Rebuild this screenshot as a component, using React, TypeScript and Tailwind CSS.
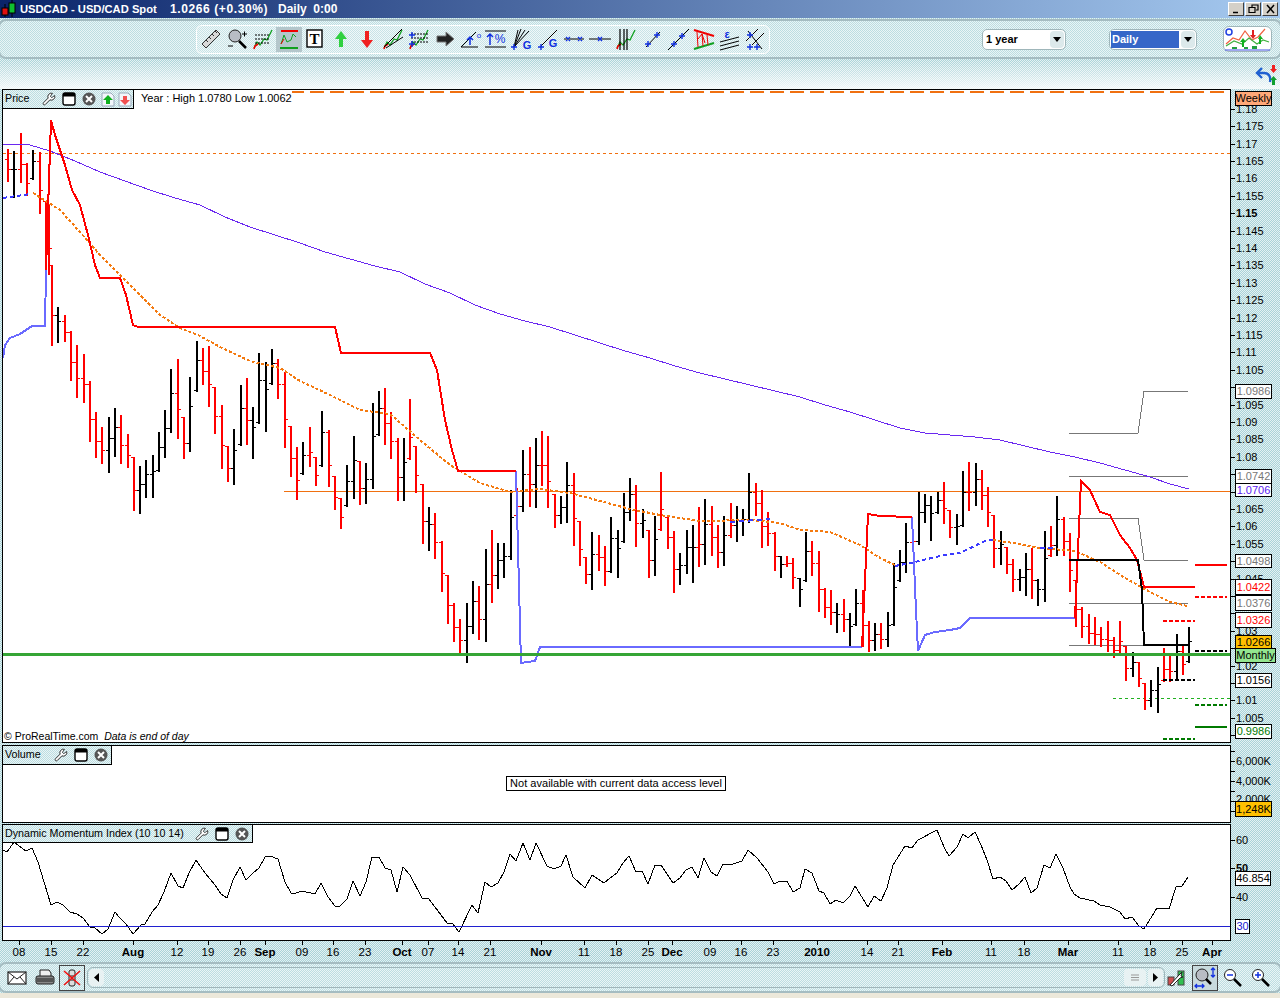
import type { ReactNode } from 'react';
import { Wrench } from 'lucide-react';

const dither = '[background:repeating-conic-gradient(#a9d3d8_0_25%,#e4f1f3_0_50%)_0_0/2px_2px]';
const fade = '[background:linear-gradient(#fff0,#ffffffd0),repeating-conic-gradient(#a9d3d8_0_25%,#e4f1f3_0_50%)_0_0/2px_2px]';
const panelFill = '[background:repeating-conic-gradient(#bcdde1_0_25%,#eaf5f6_0_50%)_0_0/2px_2px]';
const groupFill = '[background:repeating-conic-gradient(#c8e3e6_0_25%,#f0f8f9_0_50%)_0_0/2px_2px]';

// x, high, low, red
const bars: [number, number, number, number][] = [
  [7, 149, 182, 1], [13, 151, 198, 0], [20, 133, 183, 1], [26, 163, 196, 1], [32, 150, 180, 0], [39, 152, 214, 1],
  [45, 201, 275, 1], [48, 205, 275, 1], [51, 265, 346, 1], [57, 307, 343, 0], [64, 315, 342, 1], [70, 331, 381, 1],
  [76, 345, 398, 1], [83, 354, 403, 1], [89, 381, 442, 1], [95, 412, 458, 1], [101, 427, 464, 1], [108, 417, 473, 0],
  [114, 408, 457, 0], [120, 415, 464, 1], [127, 434, 468, 1], [133, 457, 511, 1], [139, 466, 514, 0], [145, 460, 498, 0],
  [152, 455, 498, 0], [158, 432, 472, 0], [164, 410, 458, 0], [170, 369, 433, 0], [177, 359, 439, 1], [183, 417, 459, 1],
  [189, 377, 452, 0], [196, 341, 392, 0], [202, 348, 385, 1], [208, 346, 407, 1], [214, 387, 434, 1], [221, 405, 469, 1],
  [227, 446, 482, 1], [233, 429, 485, 0], [240, 385, 446, 0], [246, 378, 445, 1], [252, 407, 459, 0], [258, 353, 424, 0],
  [265, 362, 432, 0], [271, 349, 385, 0], [277, 359, 399, 1], [284, 372, 448, 1], [290, 426, 477, 1], [296, 447, 500, 1],
  [302, 442, 475, 0], [309, 427, 467, 1], [315, 457, 486, 1], [321, 411, 467, 0], [328, 430, 487, 1], [334, 476, 510, 1],
  [340, 498, 529, 1], [346, 465, 507, 0], [353, 436, 499, 0], [359, 461, 505, 1], [365, 463, 504, 0], [372, 403, 489, 0],
  [378, 391, 436, 0], [384, 388, 445, 1], [390, 412, 459, 1], [397, 438, 501, 1], [403, 438, 501, 0], [409, 399, 460, 1],
  [415, 446, 493, 1], [422, 484, 544, 1], [428, 507, 551, 0], [434, 513, 559, 1], [441, 541, 592, 1], [447, 575, 624, 1],
  [453, 603, 642, 1], [459, 619, 653, 1], [466, 603, 663, 0], [472, 581, 634, 0], [478, 586, 640, 1], [485, 549, 642, 0],
  [491, 530, 603, 1], [497, 543, 589, 0], [503, 543, 578, 0], [510, 490, 560, 0], [516, 488, 517, 1], [522, 450, 512, 0],
  [529, 447, 507, 1], [535, 438, 508, 0], [541, 431, 486, 1], [547, 436, 508, 1], [554, 494, 528, 1], [560, 496, 524, 0],
  [566, 462, 523, 0], [573, 473, 546, 1], [579, 521, 566, 1], [585, 557, 584, 1], [591, 532, 590, 0], [598, 535, 571, 1],
  [604, 546, 586, 1], [610, 517, 573, 0], [617, 530, 578, 0], [623, 493, 543, 0], [629, 478, 521, 0], [635, 485, 547, 1],
  [642, 509, 538, 0], [648, 530, 578, 1], [654, 516, 576, 0], [660, 472, 531, 1], [667, 517, 549, 1], [673, 531, 593, 1],
  [679, 553, 585, 0], [686, 530, 574, 0], [692, 525, 583, 0], [698, 507, 567, 1], [704, 499, 565, 0], [711, 506, 556, 1],
  [717, 525, 568, 1], [723, 516, 566, 0], [730, 503, 538, 1], [736, 506, 542, 0], [742, 509, 536, 0], [748, 473, 523, 0],
  [755, 483, 516, 1], [761, 490, 548, 1], [767, 512, 546, 1], [774, 532, 571, 1], [780, 556, 578, 0], [786, 556, 567, 1],
  [792, 558, 589, 1], [799, 578, 607, 0], [805, 532, 582, 0], [811, 541, 576, 1], [818, 551, 612, 1], [824, 588, 618, 1],
  [830, 590, 625, 1], [836, 603, 633, 0], [843, 599, 632, 1], [849, 613, 646, 0], [855, 589, 626, 0], [862, 590, 647, 1],
  [868, 621, 652, 1], [874, 623, 651, 0], [880, 623, 649, 1], [887, 612, 647, 0], [893, 563, 626, 0], [899, 550, 582, 0],
  [905, 523, 573, 0], [912, 529, 549, 1], [918, 492, 545, 0], [924, 494, 523, 0], [930, 496, 541, 0], [937, 492, 514, 0],
  [943, 482, 524, 1], [949, 510, 538, 1], [956, 514, 545, 0], [962, 471, 527, 0], [968, 462, 511, 1], [975, 463, 506, 0],
  [981, 470, 510, 1], [987, 487, 527, 1], [993, 515, 568, 1], [1000, 531, 565, 0], [1006, 547, 574, 1], [1012, 559, 592, 1],
  [1019, 569, 591, 0], [1025, 553, 596, 0], [1031, 548, 599, 1], [1037, 579, 606, 0], [1044, 531, 602, 0], [1050, 526, 557, 1],
  [1056, 496, 556, 0], [1063, 517, 556, 1], [1069, 533, 592, 1], [1075, 580, 627, 1], [1081, 607, 638, 1], [1088, 614, 644, 1],
  [1094, 617, 645, 1], [1100, 627, 647, 1], [1107, 621, 652, 1], [1113, 637, 658, 1], [1119, 621, 653, 1], [1125, 646, 681, 1],
  [1132, 652, 677, 0], [1138, 662, 687, 1], [1144, 683, 710, 1], [1150, 680, 707, 0], [1157, 667, 713, 0], [1163, 648, 682, 1],
  [1169, 653, 682, 1], [1176, 634, 680, 0], [1182, 645, 675, 1], [1188, 627, 663, 0],
];

const ma200 = '3,144 30,145 50,151 75,161 100,172 125,181 150,190 175,198 200,205 225,217 250,227 275,235 300,243 325,252 350,259 375,266 400,272 425,284 450,293 475,305 500,314 525,321 550,327 575,335 600,343 625,351 650,358 675,366 700,373 725,379 750,385 775,391 800,397 825,405 850,412 875,420 900,428 925,433 950,435 975,437 1000,440 1025,446 1050,452 1075,457 1100,463 1125,470 1150,477 1170,484 1189,489';
const ma50 = '33,193 60,210 80,232 100,255 120,275 140,295 160,315 180,328 200,336 220,347 250,361 280,368 300,381 330,395 360,410 390,414 420,440 450,465 480,483 510,492 540,489 570,493 600,501 630,509 660,515 700,521 750,520 780,523 800,530 830,532 860,545 880,558 895,565';
const ma50b = '993,540 1020,544 1040,548 1075,551 1100,562 1125,578 1150,592 1170,602 1187,606';
const ma50Blue = '895,566 915,562 940,556 960,553 985,541 993,540';
const stopRed = ['46,270 51,120 55,135 65,165 72,190 80,205 88,235 95,265 100,278 120,278 126,295 133,325 138,327 335,327 341,353 430,353 437,370 445,420 452,450 458,471 516,471', '862,647 868,514 880,516 912,517', '1075,618 1081,481 1090,490 1100,512 1110,515 1120,535 1130,548 1137,560 1144,587 1195,587'];
const stopBlue = ['3,358 5,345 10,338 20,334 32,326 45,326 46,270', '516,471 521,663 535,661 540,647 862,647', '912,517 916,610 918,651 925,635 935,632 950,630 960,628 970,618 1075,618'];
const grey = ['1069,433 1138,433 1144,391 1188,391', '1069,476 1188,476', '1069,518 1138,518 1144,560 1188,560', '1069,603 1188,603', '1069,645 1144,645'];
const dmi = '3,850 7,852 14,842 26,851 32,848 38,862 51,905 57,902 63,905 70,912 77,914 83,918 90,927 95,928 102,934 108,929 115,912 119,917 126,924 133,934 141,925 145,924 152,912 158,905 164,892 171,873 178,886 183,888 189,873 196,860 205,873 215,885 221,894 227,898 233,880 240,867 246,880 253,873 259,868 265,857 270,856 278,859 285,882 291,893 296,893 302,891 315,894 321,883 328,897 335,906 340,906 347,899 353,881 360,896 366,882 372,857 379,857 385,868 391,870 397,892 403,867 410,875 422,898 428,898 435,907 447,923 453,924 459,932 472,905 478,913 485,882 491,887 498,883 504,872 510,854 516,861 523,843 530,860 536,843 547,866 554,869 561,866 566,855 573,877 585,888 592,875 604,883 610,878 617,873 623,863 629,856 636,872 642,871 648,884 655,865 661,865 673,883 680,878 686,870 692,867 698,878 704,858 711,872 717,876 723,864 730,865 742,861 748,850 757,858 768,872 774,884 780,881 787,881 793,892 800,888 805,869 812,873 819,891 824,893 830,904 836,900 843,903 850,896 855,886 868,907 874,896 881,901 887,888 893,865 905,846 912,848 918,840 937,830 944,847 949,856 957,847 963,834 968,838 975,832 981,845 987,860 993,879 1000,877 1006,881 1012,890 1019,884 1025,877 1031,893 1037,888 1044,865 1050,868 1056,854 1063,868 1070,887 1074,894 1080,898 1094,901 1100,905 1110,907 1120,912 1125,919 1132,917 1139,926 1144,929 1157,908 1169,909 1176,887 1182,886 1188,877';

const xLabels: [number, string, number][] = [
  [19, '08', 0], [51, '15', 0], [83, '22', 0], [133, 'Aug', 1], [177, '12', 0], [208, '19', 0], [240, '26', 0], [265, 'Sep', 1],
  [302, '09', 0], [333, '16', 0], [365, '23', 0], [402, 'Oct', 1], [428, '07', 0], [458, '14', 0], [490, '21', 0], [541, 'Nov', 1],
  [584, '11', 0], [616, '18', 0], [648, '25', 0], [672, 'Dec', 1], [710, '09', 0], [741, '16', 0], [773, '23', 0], [817, '2010', 1],
  [867, '14', 0], [898, '21', 0], [942, 'Feb', 1], [991, '11', 0], [1024, '18', 0], [1068, 'Mar', 1], [1118, '11', 0], [1150, '18', 0],
  [1182, '25', 0], [1212, 'Apr', 1],
];

// axis labels that sit fully behind a value box in the picture
const hiddenLabels = ['1.1', '1.075', '1.07', '1.05', '1.04', '1.035', '1.025', '1.015', '1'];

const priceBoxes: { top: number; h: number; w: number; text: string; cls: string }[] = [
  { top: 91, h: 15, w: 37, text: 'Weekly', cls: 'bg-[#ffa878] text-black' },
  { top: 384, h: 15, w: 37, text: '1.0986', cls: 'bg-white text-[#777777]' },
  { top: 469, h: 15, w: 37, text: '1.0742', cls: 'bg-white text-[#777777]' },
  { top: 483, h: 14, w: 37, text: '1.0706', cls: 'bg-white text-[#5a20f0]' },
  { top: 554, h: 14, w: 37, text: '1.0498', cls: 'bg-white text-[#777777]' },
  { top: 579, h: 16, w: 37, text: '1.0422', cls: 'bg-white text-[#ff0000]' },
  { top: 595, h: 16, w: 37, text: '1.0376', cls: 'bg-white text-[#777777]' },
  { top: 612, h: 16, w: 37, text: '1.0326', cls: 'bg-white text-[#ff0000]' },
  { top: 635, h: 15, w: 37, text: '1.0266', cls: 'bg-[#ffc000] text-black' },
  { top: 648, h: 15, w: 41, text: 'Monthly', cls: 'bg-[#93e68f] text-black' },
  { top: 673, h: 15, w: 37, text: '1.0156', cls: 'bg-white text-black' },
  { top: 724, h: 15, w: 37, text: '0.9986', cls: 'bg-white text-[#007a00]' },
];

function Badge({ top, h, w, text, cls }: { top: number; h: number; w: number; text: string; cls: string }) {
  return (
    <div
      className={`absolute left-[4px] flex items-center justify-center border border-black text-[11px] leading-none whitespace-nowrap ${cls}`}
      style={{ top, height: h, width: w }}
    >
      {text}
    </div>
  );
}

function PriceChart() {
  return (
    <svg viewBox="3 90 1227 652" className="block w-full h-full" shapeRendering="crispEdges" fill="none">
      <line x1="290" y1="92" x2="1226" y2="92" stroke="#f07010" strokeWidth="1.5" strokeDasharray="14 6" />
      <line x1="3" y1="153" x2="1230" y2="153" stroke="#f07010" strokeDasharray="3 3" />
      <line x1="284" y1="491" x2="1230" y2="491" stroke="#f07010" />
      <line x1="1113" y1="698" x2="1230" y2="698" stroke="#20b020" strokeDasharray="3 3" />
      {grey.map((p) => <polyline key={p} points={p} stroke="#777777" />)}
      {bars.map(([x, hi, lo, red], i) => {
        const fill = red ? '#ff0000' : '#000000';
        const close = Math.round(hi + (lo - hi) * (red ? 0.62 : 0.38));
        const prev = i > 0 ? bars[i - 1] : null;
        const prevClose = prev ? Math.round(prev[1] + (prev[2] - prev[1]) * (prev[3] ? 0.62 : 0.38)) : hi + 10;
        const open = Math.min(lo - 2, Math.max(hi, prevClose));
        return (
          <g key={x} fill={fill}>
            <rect x={x} y={hi} width="2" height={lo - hi} />
            <rect x={x - 2} y={open} width="2" height="1" />
            <rect x={x + 2} y={close} width="2" height="1" />
          </g>
        );
      })}
      <polyline points={ma200} stroke="#6a28f0" />
      <polyline points={ma50} stroke="#f47a10" strokeWidth="2" strokeDasharray="3 2" />
      <polyline points={ma50b} stroke="#f47a10" strokeWidth="2" strokeDasharray="3 2" />
      <polyline points={ma50Blue} stroke="#3a3aff" strokeWidth="2" strokeDasharray="4 3" />
      <polyline points="3,198 30,194" stroke="#3a3aff" strokeWidth="2" strokeDasharray="4 3" />
      <polyline points="730,522 770,519" stroke="#3a3aff" strokeWidth="2" strokeDasharray="5 4" />
      <polyline points="1040,548 1056,548" stroke="#3a3aff" strokeWidth="2" strokeDasharray="5 3" />
      {stopBlue.map((p) => <polyline key={p} points={p} stroke="#6a6aff" strokeWidth="2" />)}
      {stopRed.map((p) => <polyline key={p} points={p} stroke="#ff0000" strokeWidth="2" />)}
      <polyline points="1069,560 1138,560 1142,590 1144,645 1188,645" stroke="#000000" strokeWidth="2" />
      <line x1="3" y1="654" x2="1230" y2="654" stroke="#35a535" strokeWidth="3" />
      <line x1="1195" y1="565" x2="1227" y2="565" stroke="#ff0000" strokeWidth="2" />
      <line x1="1195" y1="597" x2="1227" y2="597" stroke="#ff0000" strokeWidth="2" strokeDasharray="4 2" />
      <line x1="1163" y1="621" x2="1195" y2="621" stroke="#ff0000" strokeWidth="2" strokeDasharray="4 2" />
      <line x1="1195" y1="651" x2="1227" y2="651" stroke="#000000" strokeWidth="2" strokeDasharray="4 2" />
      <line x1="1163" y1="680" x2="1195" y2="680" stroke="#000000" strokeWidth="2" strokeDasharray="4 2" />
      <line x1="1195" y1="705" x2="1227" y2="705" stroke="#007a00" strokeWidth="2" strokeDasharray="4 2" />
      <line x1="1195" y1="727" x2="1227" y2="727" stroke="#007a00" strokeWidth="2" />
      <line x1="1163" y1="739" x2="1195" y2="739" stroke="#007a00" strokeWidth="2" strokeDasharray="4 2" />
    </svg>
  );
}

function PriceAxis() {
  const rows = Array.from({ length: 37 }, (_, i) => i);
  return (
    <svg viewBox="1231 89 49 654" className="block w-full h-full">
      {rows.map((i) => {
        const y = Math.round(108.8 + i * 17.4);
        const label = String(Number((1.18 - i * 0.005).toFixed(3)));
        return (
          <g key={i}>
            <line x1="1231" x2="1235" y1={y + 0.5} y2={y + 0.5} stroke="#000" />
            {!hiddenLabels.includes(label) && (
              <text x="1236" y={y + 4} fontSize="11" fontWeight={label === '1.15' ? 700 : 400} fill="#000">{label}</text>
            )}
          </g>
        );
      })}
    </svg>
  );
}

function VolumeAxis() {
  return (
    <svg viewBox="1231 745 49 78" className="block w-full h-full">
      {[751, 761, 771, 781, 791, 801, 811].map((y) => (
        <line key={y} x1="1231" x2="1235" y1={y + 0.5} y2={y + 0.5} stroke="#000" />
      ))}
      <text x="1236" y="765" fontSize="11" fill="#000">6,000K</text>
      <text x="1236" y="785" fontSize="11" fill="#000">4,000K</text>
      <text x="1236" y="803" fontSize="11" fill="#000">2,000K</text>
    </svg>
  );
}

function DmiAxis() {
  return (
    <svg viewBox="1231 824 49 117" className="block w-full h-full">
      {[840, 868, 897].map((y) => (
        <line key={y} x1="1231" x2="1235" y1={y + 0.5} y2={y + 0.5} stroke="#000" />
      ))}
      <text x="1236" y="844" fontSize="11" fill="#000">60</text>
      <text x="1236" y="872" fontSize="11" fontWeight="700" fill="#000">50</text>
      <text x="1236" y="901" fontSize="11" fill="#000">40</text>
    </svg>
  );
}

function WindowIcon() {
  return (
    <svg width="14" height="14" viewBox="0 0 14 14">
      <rect x="1" y="1" width="12" height="12" rx="2" fill="#fff" stroke="#000" strokeWidth="1.4" />
      <rect x="1" y="1" width="12" height="3.5" fill="#000" />
    </svg>
  );
}

function CloseIcon() {
  return (
    <svg width="14" height="14" viewBox="0 0 14 14">
      <circle cx="7" cy="7" r="6.5" fill="#555" />
      <path d="M4 4l6 6M10 4l-6 6" stroke="#fff" strokeWidth="2" />
    </svg>
  );
}

function PageArrow({ up }: { up?: boolean }) {
  return (
    <svg width="14" height="15" viewBox="0 0 14 15">
      <path d="M1 1h9l3 3v10H1z" fill="#f2f6fb" stroke="#9ab" />
      {up ? <path d="M7 3l5 5H9v4H5V8H2z" fill="#10b020" /> : <path d="M7 13l5-5H9V4H5v4H2z" fill="#f05050" />}
    </svg>
  );
}

function PanelTab({ label, labelWidth, arrows, height }: { label: string; labelWidth: string; arrows?: boolean; height: string }) {
  return (
    <div className={`absolute left-0 top-0 flex items-center border-r border-b border-black text-[10.7px] text-black ${panelFill} ${height}`}>
      <span className={`pl-[2px] pb-[1px] whitespace-nowrap ${labelWidth}`}>{label}</span>
      <span className="w-5 flex justify-center"><Wrench size={14} fill="#fff" stroke="#222" strokeWidth={1.6} /></span>
      <span className="w-5 flex justify-center"><WindowIcon /></span>
      <span className="w-5 flex justify-center"><CloseIcon /></span>
      {arrows && (
        <>
          <span className="w-[17px] flex justify-center"><PageArrow up /></span>
          <span className="w-[17px] flex justify-center"><PageArrow /></span>
        </>
      )}
    </div>
  );
}

function ChartRow({ height, axis, badges, children }: { height: string; axis: ReactNode; badges: ReactNode; children: ReactNode }) {
  return (
    <div className={`flex pl-[2px] shrink-0 ${height}`}>
      <div className="relative w-[1229px] h-full border border-black bg-white">{children}</div>
      <div className="relative flex-1 h-full">
        {axis}
        {badges}
      </div>
    </div>
  );
}

const mini = (
  <>
    <path d="M3 21l3-6 3 3 4-6 3 1 5-10" fill="none" stroke="#10a020" strokeWidth="1.3" />
    <path d="M3 22l1-3 3-2" fill="none" stroke="#f00000" strokeWidth="1.6" />
  </>
);

const blueCross = (x: number, y: number) => (
  <path d={`M${x - 3} ${y}h6M${x} ${y - 3}v6`} stroke="#1030e0" strokeWidth="1.4" />
);

const toolIcons: ReactNode[] = [
  <g key="ruler"><path d="M3 17L17 3l4 4L7 21z" fill="#d8d8d8" stroke="#333" /><path d="M7 13l2 2M10 10l2 2M13 7l2 2M16 4l2 2" stroke="#333" /></g>,
  <g key="zoom"><circle cx="10" cy="9" r="6" fill="#b8bcc4" stroke="#222" /><path d="M14 14l7 7" stroke="#000" strokeWidth="2.5" /><path d="M17 7h5M19.5 4.5v5M3 19h5" stroke="#000" /></g>,
  <g key="levels">{mini}<path d="M4 8h14M4 12h14M4 16h14" stroke="#000" strokeDasharray="2 1" /></g>,
  <g key="range"><path d="M4 4h17" stroke="#f00000" strokeWidth="2" /><path d="M3 21h18" stroke="#10a020" strokeWidth="2" /><path d="M4 17l3-9 3 7 4-2 2-6 3 3" fill="none" stroke="#10a020" /><path d="M4 17l3-5" stroke="#f00000" /></g>,
  <g key="text"><rect x="4" y="3" width="15" height="17" fill="#fff" stroke="#000" strokeWidth="1.4" /><text x="11.5" y="17" textAnchor="middle" fontSize="15" fontWeight="700" fontFamily="Liberation Serif" fill="#000">T</text></g>,
  <path key="up" d="M12 4l6 8h-4v8h-4v-8H6z" fill="#30d040" />,
  <path key="down" d="M12 21l6-8h-4V4h-4v9H6z" fill="#f02020" />,
  <g key="fan">{mini}<path d="M3 20L21 2M5 21l17-11" stroke="#000" /></g>,
  <g key="fib">{mini}<path d="M4 7h18M4 11h18M4 15h18" stroke="#000" strokeDasharray="2 1" />{blueCross(5, 8)}{blueCross(5, 17)}</g>,
  <path key="next" d="M4 9h9V5l8 7-8 7v-4H4z" fill="#222" stroke="#777" />,
  <g key="angle"><path d="M2 20h17M2 20L17 5" stroke="#000" fill="none" /><path d="M11 18v-7M8 13l3-3 3 3" stroke="#1030e0" strokeWidth="1.5" fill="none" /><text x="20" y="11" textAnchor="middle" fontSize="8" fill="#1030e0">o</text></g>,
  <g key="pct"><path d="M1 4h21M1 20h21" stroke="#000" /><path d="M6 18V7M3 10l3-3 3 3" stroke="#1030e0" strokeWidth="1.5" fill="none" /><text x="16" y="16" textAnchor="middle" fontSize="12" fill="#1030e0">%</text></g>,
  <g key="gfan"><path d="M4 20L11 2M4 20L15 3M4 20L19 4M4 20L8 3" stroke="#000" />{blueCross(4, 20)}<text x="17" y="22" textAnchor="middle" fontSize="11" fontWeight="700" fill="#1030e0">G</text></g>,
  <g key="gline"><path d="M4 20L21 3" stroke="#000" />{blueCross(5, 20)}<text x="17" y="20" textAnchor="middle" fontSize="11" fontWeight="700" fill="#1030e0">G</text></g>,
  <g key="xx"><path d="M2 12h20" stroke="#000" /><path d="M4 10l4 4M8 10l-4 4M16 10l4 4M20 10l-4 4" stroke="#1030e0" strokeWidth="1.3" /></g>,
  <g key="hl"><path d="M1 12h22" stroke="#000" /><path d="M10 10l4 4M14 10l-4 4" stroke="#1030e0" strokeWidth="1.3" /></g>,
  <g key="vert">{mini}<path d="M6 2v21M10 2v21M13 2v21" stroke="#000" strokeWidth="1.2" /></g>,
  <g key="seg"><path d="M6 20L20 5" stroke="#000" />{blueCross(8, 17)}{blueCross(17, 8)}</g>,
  <g key="ray"><path d="M2 23L23 2" stroke="#000" />{blueCross(8, 17)}{blueCross(16, 9)}</g>,
  <g key="tri"><path d="M2 3l20 6" strokeWidth="2" stroke="#f00000" fill="none" /><path d="M2 22l20-6" strokeWidth="2" stroke="#10a020" /><path d="M5 5l1 15M10 7l1 12M15 8l1 10M6 12l4-5 3 9" stroke="#f00000" fill="none" /></g>,
  <g key="eps"><text x="9" y="11" textAnchor="middle" fontSize="11" fontWeight="700" fill="#1030e0">ε</text><path d="M2 15l19-5M2 19l19-5M2 23l19-5" stroke="#000" /></g>,
  <g key="par"><path d="M2 14L14 2M8 18L20 6M4 4l14 18" stroke="#000" />{blueCross(6, 20)}{blueCross(13, 20)}{blueCross(6, 8)}</g>,
];

function ToolIcon({ icon, active }: { icon: ReactNode; active: boolean }) {
  return (
    <div className={`w-[26px] h-[25px] flex items-center justify-center ${active ? 'bg-[#b4c6cb]' : ''}`}>
      <svg width="24" height="24" viewBox="0 0 24 24" fill="none">{icon}</svg>
    </div>
  );
}

function SelectBox({ width, children }: { width: string; children: ReactNode }) {
  return (
    <div className={`h-[21px] flex items-center rounded-[5px] border border-[#9fb6ba] bg-white p-[1px] text-[11px] font-bold ${width}`}>
      {children}
      <span className="ml-auto w-[14px] h-[17px] flex items-center justify-center bg-[#dce9eb] rounded-sm">
        <svg width="8" height="5" viewBox="0 0 8 5"><path d="M0 0h8L4 5z" fill="#000" /></svg>
      </span>
    </div>
  );
}

function WindowButton({ children }: { children: ReactNode }) {
  return (
    <div className="w-[16px] h-[14px] flex items-center justify-center bg-[#d4d0c8] border-t border-l border-white border-r border-b border-r-[#404040] border-b-[#404040]">
      <svg width="11" height="10" viewBox="0 0 11 10" fill="none" stroke="#000" strokeWidth="1.5">{children}</svg>
    </div>
  );
}

export default function App() {
  return (
    <div className={`w-[1280px] h-[998px] overflow-hidden flex flex-col font-['Liberation_Sans',Arial,sans-serif] ${dither}`}>
      {/* title bar */}
      <div className="h-[18px] shrink-0 flex items-center bg-[linear-gradient(90deg,#0a246a,#a6caf0)] text-white text-[12px] font-bold whitespace-pre">
        <svg width="20" height="18" viewBox="0 0 20 18" className="shrink-0">
          <path d="M5 4v13M12 0v17" stroke="#000" />
          <rect x="2" y="8" width="6" height="7" fill="#e01010" stroke="#000" />
          <rect x="9" y="3" width="6" height="10" fill="#10c030" stroke="#000" />
        </svg>
        <span className="w-[150px] text-[11.2px]">USDCAD - USD/CAD Spot</span>
        <span className="w-[108px] tracking-[0.6px]">1.0266 (+0.30%)</span>
        <span>Daily  0:00</span>
        <div className="ml-auto flex items-center gap-[1px] pr-[2px]">
          <WindowButton><path d="M2 8.5h5" /></WindowButton>
          <WindowButton><path d="M4 3V1h6v5H8M1 3.5h6v5H1z" strokeWidth="1.2" /></WindowButton>
          <WindowButton><path d="M2 1l7 8M9 1L2 9" /></WindowButton>
        </div>
      </div>

      {/* toolbar */}
      <div className="h-[42px] shrink-0 py-[1px]">
        <div className={`h-full -mx-[2px] flex items-center pl-[196px] rounded-lg border-2 border-[#a5bcc1] ${panelFill}`}>
          <div className={`w-[574px] h-[29px] flex items-center pl-[1px] rounded-md border border-white ${groupFill}`}>
            {toolIcons.map((icon, i) => <ToolIcon key={i} icon={icon} active={i === 3} />)}
          </div>
          <div className="ml-[212px]">
            <SelectBox width="w-[84px]"><span className="pl-[2px]">1 year</span></SelectBox>
          </div>
          <div className="ml-[43px]">
            <SelectBox width="w-[88px]"><span className="w-[68px] h-[17px] flex items-center pl-[1px] bg-[#3566c8] text-white">Daily</span></SelectBox>
          </div>
          <div className="ml-[26px] w-[49px] h-[26px] rounded-md border border-[#9fb6ba] bg-white">
            <svg width="47" height="24" viewBox="0 0 47 24" fill="none">
              <circle cx="5" cy="5" r="3" stroke="#2040e0" strokeWidth="1.5" />
              <path d="M2 17l7-6 6 2 6-9 7 9 6-3 7-8" stroke="#f06040" strokeWidth="1.2" />
              <path d="M2 19l8-5 8 3 7-6 8 6 6-4 6 2" stroke="#40b040" strokeWidth="1.2" />
              <path d="M16 15l3-4 3 4h-2v5h-2v-5zM34 12l2-4 3 4h-2v5h-2v-5z" fill="#10b020" />
              <path d="M26 8l3 4 3-4h-2V3h-2v5z" fill="#e02020" />
              <path d="M8 20h5v2H8zM20 20h4v2h-4zM28 19h5v3h-5z" fill="#20a040" />
              <path d="M1 23h45" stroke="#4050e0" />
            </svg>
          </div>
        </div>
      </div>

      {/* spacer band */}
      <div className={`h-[29px] shrink-0 flex justify-end items-start pr-[3px] pt-[4px] ${fade}`}>
        <svg width="22" height="22" viewBox="0 0 22 22" fill="none">
          <path d="M15 18c1-5-1-9-6-9H3" stroke="#2060d0" strokeWidth="2.4" />
          <path d="M7 4L2 9l5 5" stroke="#2060d0" strokeWidth="2.4" />
          <path d="M17 1h3v4h2l-3.500 4L15 5h2z" fill="#f02020" />
          <path d="M18.500 12l3.500 4h-2v5h-3v-5h-2z" fill="#10a030" />
        </svg>
      </div>

      {/* price */}
      <ChartRow
        height="h-[654px]"
        axis={<PriceAxis />}
        badges={priceBoxes.map((b) => <Badge key={b.text} {...b} top={b.top - 89} />)}
      >
        <PriceChart />
        <PanelTab label="Price" labelWidth="w-[36px]" arrows height="h-[19px]" />
        <span className="absolute left-[138px] top-0 text-[11px] text-black whitespace-pre bg-white">Year : High 1.0780 Low 1.0062</span>
        <span className="absolute left-[1px] bottom-[-1px] text-[10.5px] leading-[14px] text-black whitespace-pre">© ProRealTime.com  <i>Data is end of day</i></span>
      </ChartRow>
      <div className="h-[2px] shrink-0" />

      {/* volume */}
      <ChartRow
        height="h-[78px]"
        axis={<VolumeAxis />}
        badges={<Badge top={56} h={16} w={37} text="1,248K" cls="bg-[#ffc000] text-black" />}
      >
        <PanelTab label="Volume" labelWidth="w-[48px]" height="h-[19px]" />
        <div className="h-full flex items-center justify-center pb-[1px]">
          <span className="mr-[1px] border border-black bg-white px-[3px] text-[11px] tracking-[0.02px] leading-[13px] text-black">Not available with current data access level</span>
        </div>
      </ChartRow>
      <div className="h-[1px] shrink-0" />

      {/* dynamic momentum index */}
      <ChartRow
        height="h-[117px]"
        axis={<DmiAxis />}
        badges={
          <>
            <Badge top={47} h={15} w={36} text="46.854" cls="bg-white text-black" />
            <Badge top={95} h={15} w={15} text="30" cls="bg-white text-[#2020d0]" />
          </>
        }
      >
        <svg viewBox="3 825 1227 115" className="block w-full h-full" fill="none">
          <polyline points={dmi} stroke="#000" shapeRendering="crispEdges" />
          <line x1="3" x2="1230" y1="926.500" y2="926.500" stroke="#2020d0" />
        </svg>
        <PanelTab label="Dynamic Momentum Index (10 10 14)" labelWidth="w-[189px]" height="h-[18px]" />
      </ChartRow>

      {/* time axis */}
      <svg viewBox="0 941 1280 21" className="block w-[1280px] h-[21px] shrink-0">
        {xLabels.map(([x, label, bold]) => (
          <g key={`${x}${label}`}>
            <line x1={x + 0.5} x2={x + 0.5} y1="941" y2="945" stroke="#000" />
            <text x={x} y="956" textAnchor="middle" fontSize="11.500" fontWeight={bold ? 700 : 400} fill="#000">{label}</text>
          </g>
        ))}
      </svg>

      {/* bottom bar */}
      <div className={`h-[31px] shrink-0 -mx-[2px] flex items-center pl-[7px] rounded-lg border-2 border-[#a5bcc1] ${panelFill}`}>
        <svg width="20" height="14" viewBox="0 0 20 14" className="shrink-0">
          <rect x="1" y="1" width="18" height="12" fill="#fff" stroke="#222" strokeWidth="1.2" />
          <path d="M1 1l9 7 9-7M1 13l6-7M19 13l-6-7" fill="none" stroke="#222" />
        </svg>
        <svg width="20" height="17" viewBox="0 0 20 17" className="ml-[8px] shrink-0">
          <path d="M5 1h9l2 3v4H5z" fill="#eee" stroke="#222" />
          <rect x="1" y="7" width="18" height="8" rx="2" fill="#888" stroke="#222" />
          <path d="M2 10h16M2 12h16" stroke="#222" />
        </svg>
        <div className="ml-[4px] w-[26px] h-[26px] shrink-0 flex items-center justify-center border border-[#444]">
          <svg width="18" height="18" viewBox="0 0 18 18" fill="none">
            <rect x="6" y="1" width="6" height="16" rx="2" fill="#ddd" stroke="#222" />
            <path d="M7 7h4M7 11h4" stroke="#222" />
            <path d="M1 2l16 14M17 2L1 16" stroke="#f01010" strokeWidth="1.6" />
          </svg>
        </div>
        <div className="ml-[2px] w-[1078px] h-[21px] shrink-0 flex items-center px-[1px] rounded-md border border-[#9fb6ba]">
          <span className="w-[15px] h-[17px] flex items-center justify-center bg-[#e8f2f3] rounded-sm">
            <svg width="5" height="9" viewBox="0 0 5 9"><path d="M5 0v9L0 4.500z" fill="#000" /></svg>
          </span>
          <span className="ml-auto w-[22px] h-[17px] flex items-center justify-center bg-[#e8f2f3] rounded">
            <svg width="10" height="7" viewBox="0 0 10 7"><path d="M1 1h8M1 3.500h8M1 6h8" stroke="#999" /></svg>
          </span>
          <span className="ml-[2px] w-[15px] h-[17px] flex items-center justify-center bg-[#e8f2f3] rounded-sm">
            <svg width="5" height="9" viewBox="0 0 5 9"><path d="M0 0v9l5-4.500z" fill="#000" /></svg>
          </span>
        </div>
        <svg width="18" height="18" viewBox="0 0 18 18" className="ml-[2px] shrink-0">
          <rect x="1" y="8" width="6" height="8" fill="#d05050" stroke="#444" />
          <rect x="11" y="2" width="6" height="14" fill="#30c050" stroke="#444" />
          <path d="M3 16L12 6l3-3-1 4 2 1-3 1-8 8z" fill="#fff" stroke="#222" />
        </svg>
        <div className="ml-[7px] w-[26px] h-[26px] shrink-0 flex items-center justify-center border border-[#444] bg-[#c8dadd]">
          <svg width="24" height="24" viewBox="0 0 24 24" fill="none">
            <circle cx="9" cy="9" r="6" fill="#b8bcc4" stroke="#222" />
            <path d="M13 13l5 5" stroke="#000" strokeWidth="2.500" />
            <path d="M20 2v9M18 4l2-2 2 2M18 9l2 2 2-2M2 20h9M4 18l-2 2 2 2M9 18l2 2-2 2" stroke="#1030e0" strokeWidth="1.300" />
          </svg>
        </div>
        <svg width="20" height="20" viewBox="0 0 20 20" fill="none" className="ml-[5px] shrink-0">
          <circle cx="7" cy="7" r="5.500" fill="#fff" stroke="#222" />
          <path d="M4 7h6" stroke="#1030e0" strokeWidth="1.500" />
          <path d="M11 11l7 7" stroke="#000" strokeWidth="2.500" />
        </svg>
        <svg width="20" height="20" viewBox="0 0 20 20" fill="none" className="ml-[8px] shrink-0">
          <circle cx="7" cy="7" r="5.500" fill="#fff" stroke="#222" />
          <path d="M4 7h6M7 4v6" stroke="#1030e0" strokeWidth="1.500" />
          <path d="M11 11l7 7" stroke="#000" strokeWidth="2.500" />
        </svg>
      </div>
      <div className="flex-1 bg-[#ece8da]" />
    </div>
  );
}
